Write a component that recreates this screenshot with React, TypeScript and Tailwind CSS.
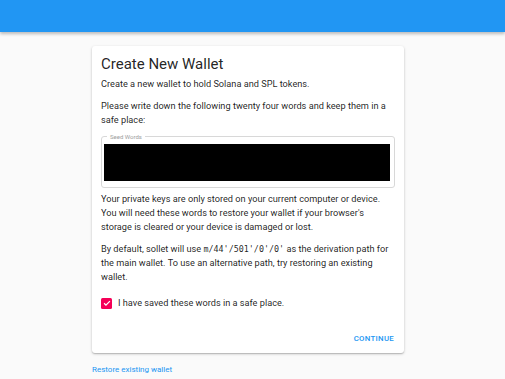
export default function App() {
  return (
    <div className="min-h-[379px] bg-[#fafafa] font-['Roboto',sans-serif] text-[rgba(0,0,0,0.87)]">
      <header className="h-8 bg-[#2196f3] shadow-[0_2px_3px_rgba(0,0,0,0.25)]" />
      <main className="mx-auto w-[321px] pt-[14px]">
        <div className="w-[312px] rounded-[3px] bg-white px-[9px] pb-[7px] pt-[9px] shadow-[0_1px_3px_rgba(0,0,0,0.2),0_1px_1px_rgba(0,0,0,0.14)]">
          <h2 className="text-[15px] leading-[18px]">Create New Wallet</h2>
          <p className="mt-[4px] text-[9.2px] leading-[14px]">
            Create a new wallet to hold Solana and SPL tokens.
          </p>
          <p className="mt-[8px] text-[9.2px] leading-[14px]">
            Please write down the following twenty four words and keep them in a safe place:
          </p>
          <div className="relative mt-[9px] h-[52px] rounded-[3px] border border-[#d8d8d8] pl-[2px] pr-[4px] pt-[7px]">
            <span className="absolute left-[5px] top-[-4px] bg-white px-[3px] text-[6px] leading-[7px] text-[#9e9e9e]">
              Seed Words
            </span>
            <div className="h-[37px] bg-black" />
          </div>
          <p className="mt-[4px] text-[9.2px] leading-[14px]">
            Your private keys are only stored on your current computer or device. You will need these
            words to restore your wallet if your browser's storage is cleared or your device is damaged
            or lost.
          </p>
          <p className="mt-[8px] text-[9.2px] leading-[14px]">
            By default, sollet will use{' '}
            <code className="font-['DejaVu_Sans_Mono',monospace] text-[8.4px] leading-[14px]">m/44'/501'/0'/0'</code>{' '}
            as the derivation path for the main wallet. To use an alternative path, try restoring an
            existing wallet.
          </p>
          <label className="mt-[12px] flex items-center gap-[6px] text-[9.2px] leading-[14px]">
            <span className="flex h-[11px] w-[11px] items-center justify-center rounded-[1.5px] bg-[#f50057]">
              <svg viewBox="0 0 24 24" className="h-[10px] w-[10px]" fill="none" stroke="white" strokeWidth="3">
                <path d="M5 12.5l4.5 4.5L19 7.5" />
              </svg>
            </span>
            I have saved these words in a safe place.
          </label>
          <div className="mt-[22px] flex justify-end">
            <button className="pr-[1px] text-[7.8px] font-medium uppercase leading-[14px] tracking-[0.3px] text-[#2196f3]">
              Continue
            </button>
          </div>
        </div>
        <a className="mt-[11px] block text-[8px] leading-[12px] text-[#2196f3]">Restore existing wallet</a>
      </main>
    </div>
  );
}
